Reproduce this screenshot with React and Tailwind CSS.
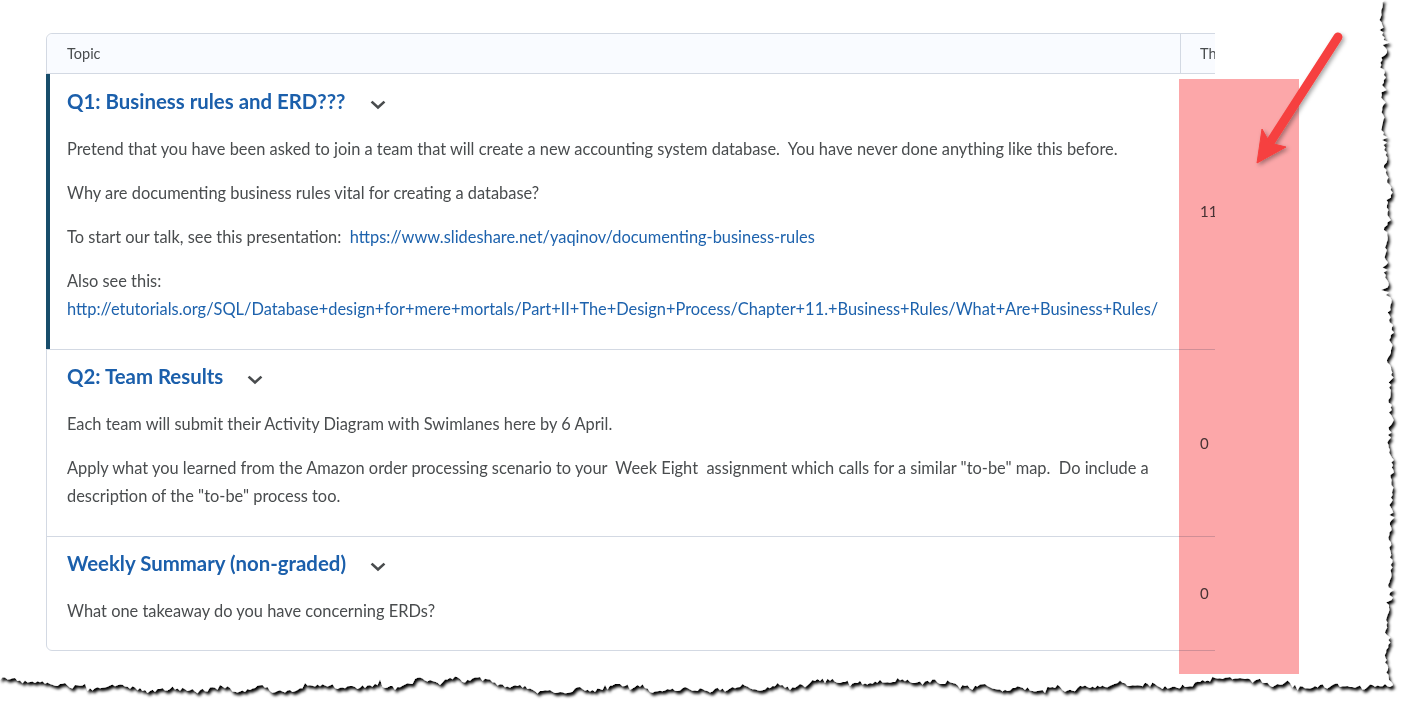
import React from "react";

// seeded random so the torn edge is the same on every run
function rng(seed) {
  let s = seed;
  return () => {
    s = (s * 16807) % 2147483647;
    return (s - 1) / 2147483646;
  };
}

function tornPath() {
  const r = rng(11);
  const pts = [];
  let x = 1387;
  for (let y = 0; y <= 686; y += 2.5) {
    x += (r() - 0.5) * 4.5;
    x = Math.max(1381, Math.min(1393, x));
    const spike = r() < 0.12 ? (r() - 0.5) * 8 : 0;
    pts.push([x + (r() - 0.5) * 3 + spike, y]);
  }
  let y = 686;
  for (let xx = 1390; xx >= 0; xx -= 2.5) {
    y += (r() - 0.5) * 4.5;
    y = Math.max(678, Math.min(692, y));
    const spike = r() < 0.12 ? (r() - 0.5) * 8 : 0;
    pts.push([xx, y + (r() - 0.5) * 3 + spike]);
  }
  return "M0,0 " + pts.map((p) => `L${p[0].toFixed(1)},${p[1].toFixed(1)}`).join(" ") + " L0,0 Z";
}

const Chevron = () => (
  <svg width="16" height="10" viewBox="0 0 16 10" className="ml-[24px] mt-[8px]">
    <path d="M2.5 2.5 L8 7.5 L13.5 2.5" fill="none" stroke="#494c4e" strokeWidth="2.6" strokeLinecap="square" />
  </svg>
);

const Title = ({ children }) => (
  <div className="flex items-center h-[30px]">
    <span className="text-[20.4px] font-bold leading-[30px] text-[#1b5fab]">{children}</span>
    <Chevron />
  </div>
);

const P = ({ children, last }) => (
  <p className={`text-[16.4px] leading-[28px] text-[#494c4e] ${last ? "" : "mb-[16px]"}`}>{children}</p>
);

const A = ({ children }) => <a className="text-[#1d62ad]">{children}</a>;

const Count = ({ n }) => (
  <div className="flex-1 flex items-center pl-[19px] text-[15px] text-[#494c4e]">{n}</div>
);

export default function App() {
  return (
    <div className="relative w-[1401px] h-[701px] bg-white overflow-hidden font-['Lato',sans-serif]">
      {/* paper with torn right and bottom edges */}
      <svg className="absolute inset-0" width="1401" height="701">
        <defs>
          <filter id="torn" x="-5%" y="-5%" width="110%" height="110%">
            <feDropShadow dx="2" dy="3" stdDeviation="1.8" floodColor="#000" floodOpacity="1" />
          </filter>
        </defs>
        <path d={tornPath()} fill="#fff" filter="url(#torn)" />
      </svg>

      <div className="relative pt-[33px] pl-[46px]">
        <div className="w-[1169px] overflow-hidden">
          <div className="w-[1320px] border border-[#d3d9e3] rounded-[6px] bg-white">
            {/* header */}
            <div className="flex h-[40px] bg-[#f9fbff] border-b border-[#d3d9e3] rounded-t-[6px] text-[14.5px] text-[#494c4e]">
              <div className="w-[1134px] border-r border-[#d3d9e3] px-[20px] flex items-center">Topic</div>
              <div className="flex-1 pl-[19px] flex items-center">Threads</div>
            </div>

            {/* Q1 */}
            <div className="flex border-b border-[#d3d9e3]">
              <div className="w-[1135px] -ml-px border-l-[4px] border-[#174d6b] pl-[17px] pr-[18px] pt-[12px] pb-[26px]">
                <Title>Q1: Business rules and ERD???</Title>
                <div className="mt-[19px]">
                  <P>
                    Pretend that you have been asked to join a team that will create a new accounting system
                    database.{"\u00a0"} You have never done anything like this before.
                  </P>
                  <P>Why are documenting business rules vital for creating a database?</P>
                  <P>
                    To start our talk, see this presentation:{"\u00a0 "}
                    <A>https://www.slideshare.net/yaqinov/documenting-business-rules</A>
                  </P>
                  <P last>
                    Also see this:{" "}
                    <A>
                      http://etutorials.org/SQL/Database+design+for+mere+mortals/Part+II+The+Design+Process/Chapter+11.+Business+Rules/What+Are+Business+Rules/
                    </A>
                  </P>
                </div>
              </div>
              <Count n="11" />
            </div>

            {/* Q2 */}
            <div className="flex border-b border-[#d3d9e3]">
              <div className="w-[1134px] pl-[20px] pr-[18px] pt-[11px] pb-[26px]">
                <Title>Q2: Team Results</Title>
                <div className="mt-[19px]">
                  <P>Each team will submit their Activity Diagram with Swimlanes here by 6 April.</P>
                  <P last>
                    Apply what you learned from the Amazon order processing scenario to your{"\u00a0 "}Week Eight
                    {"\u00a0 "}assignment which calls for a similar "to-be" map.{"\u00a0 "}Do include a description of
                    the "to-be" process too.
                  </P>
                </div>
              </div>
              <Count n="0" />
            </div>

            {/* Weekly summary */}
            <div className="flex">
              <div className="w-[1134px] px-[20px] pt-[11px] pb-[25px]">
                <Title>Weekly Summary (non-graded)</Title>
                <div className="mt-[19px]">
                  <P last>What one takeaway do you have concerning ERDs?</P>
                </div>
              </div>
              <Count n="0" />
            </div>
          </div>
        </div>
      </div>

      {/* highlight over the threads column */}
      <div className="absolute left-[1179px] top-[79px] w-[120px] h-[595px] bg-[#fca7a9] mix-blend-multiply" />

      {/* callout arrow */}
      <svg className="absolute left-0 top-0" width="1401" height="701">
        <defs>
          <filter id="arrowShadow" x="-20%" y="-20%" width="140%" height="140%">
            <feDropShadow dx="2" dy="2" stdDeviation="2" floodColor="#000" floodOpacity="0.35" />
          </filter>
        </defs>
        <g filter="url(#arrowShadow)" fill="#f6413f" stroke="#f6413f">
          <line x1="1338" y1="37" x2="1271" y2="141" strokeWidth="9" strokeLinecap="round" />
          <polygon points="1257,163 1262,129 1270,143 1286,147" strokeWidth="1" strokeLinejoin="round" />
        </g>
      </svg>
    </div>
  );
}
